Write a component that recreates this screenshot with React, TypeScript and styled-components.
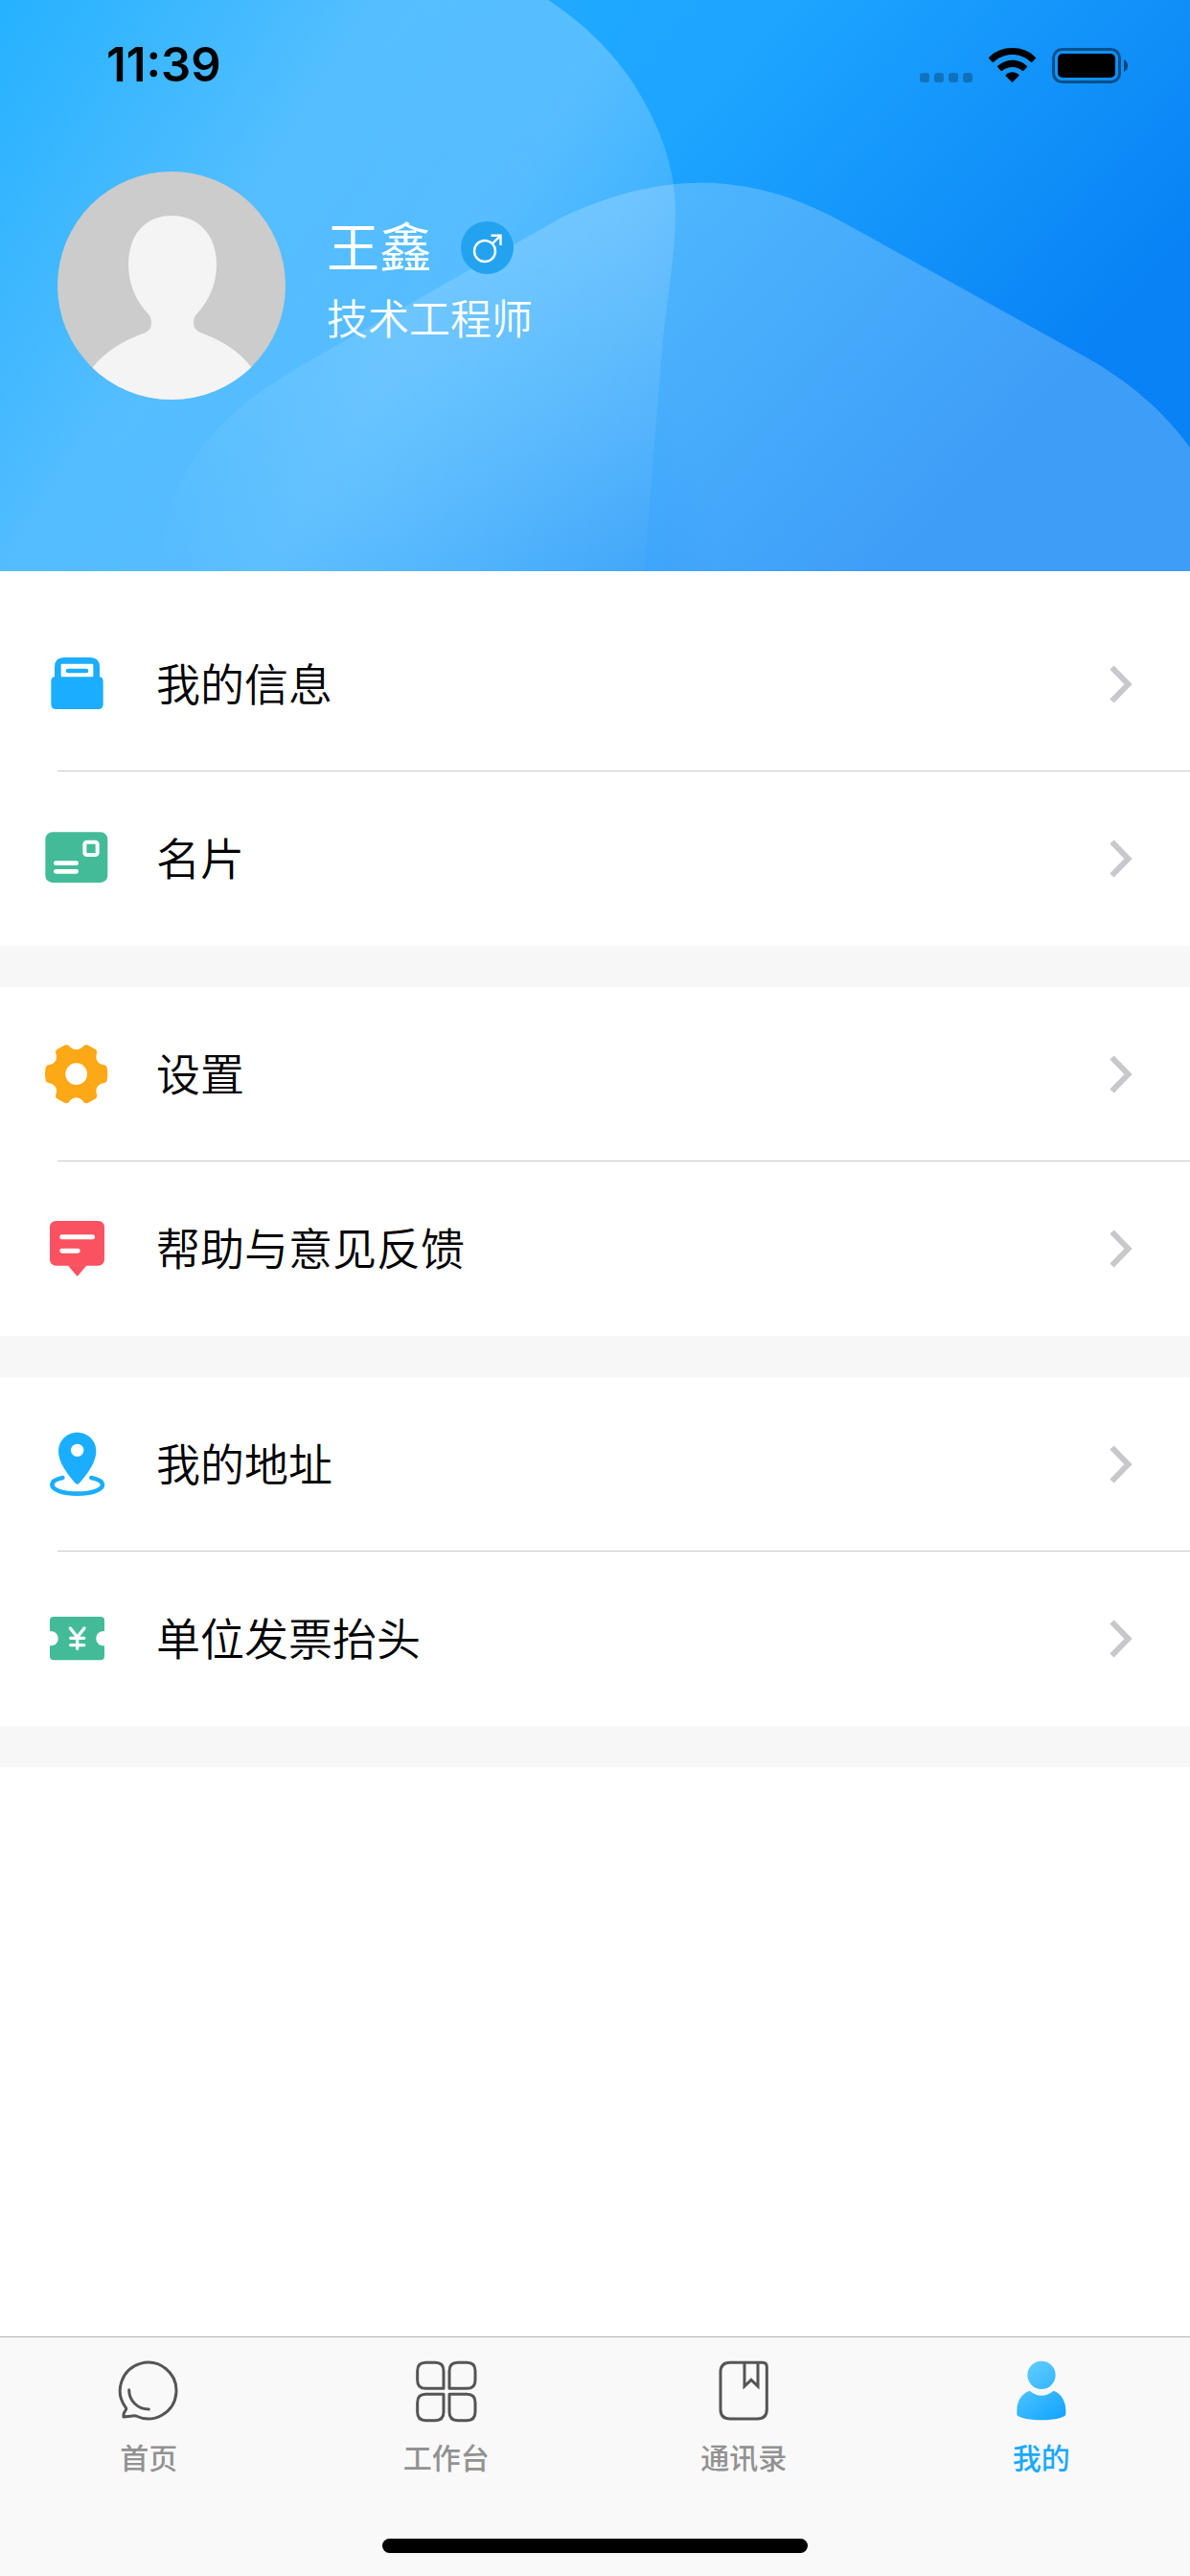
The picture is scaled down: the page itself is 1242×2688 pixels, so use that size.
import React from "react";
import styled, { createGlobalStyle } from "styled-components";

const GlobalStyle = createGlobalStyle`
  *, *::before, *::after { box-sizing: border-box; }
  body {
    margin: 0;
    background: #ffffff;
    font-family: "Noto Sans CJK SC", sans-serif;
    font-weight: 350;
  }
  ul { margin: 0; padding: 0; list-style: none; }
  a { color: inherit; text-decoration: none; }
  svg { display: block; }
`;

const Page = styled.div`
  min-height: 100vh;
  display: flex;
  flex-direction: column;
`;

const Hero = styled.header`
  position: relative;
  height: 596px;
  overflow: hidden;
  background: #1ca3ff;
`;

const HeroArt = styled.svg`
  position: absolute;
  inset: 0;
  width: 100%;
  height: 100%;
`;

const HeroContent = styled.div`
  position: relative;
`;

const StatusBar = styled.div`
  display: flex;
  align-items: center;
  justify-content: space-between;
  height: 135px;
  padding: 0 65px 0 111px;
`;

const Clock = styled.time`
  color: #000000;
  font-family: Inter, sans-serif;
  font-size: 49px;
  font-weight: 600;
  line-height: 60px;
`;

const StatusIcons = styled.div`
  display: flex;
  align-items: center;
  gap: 17px;
`;

const Profile = styled.section`
  display: flex;
  align-items: flex-start;
  gap: 43px;
  padding: 44px 60px 0;
`;

const Avatar = styled.div`
  flex: none;
  width: 238px;
  height: 238px;
  border-radius: 50%;
  overflow: hidden;
  background: #cccccc;
`;

const Identity = styled.div`
  padding-top: 41px;
  color: #ffffff;
`;

const NameRow = styled.div`
  display: flex;
  align-items: center;
  gap: 30px;
`;

const Name = styled.h1`
  margin: 0;
  padding-bottom: 8px;
  font-size: 55px;
  font-weight: 400;
  line-height: 68px;
`;

const JobTitle = styled.p`
  margin: 0;
  font-size: 43px;
  line-height: 68px;
`;

const Menu = styled.main`
  flex: 1;
  padding-top: 27px;
`;

const MenuGroup = styled.ul`
  border-bottom: 43px solid #f7f7f7;
`;

const MenuItem = styled.li`
  &:not(:last-child)::after {
    content: "";
    display: block;
    height: 1px;
    margin-left: 60px;
    background: #c8c7cc;
  }

  &:last-child {
    padding-bottom: 1px;
  }
`;

const MenuLink = styled.a`
  display: flex;
  align-items: center;
  height: 181px;
  padding: 0 60px 0 45px;
`;

const MenuLabel = styled.span`
  flex: 1;
  margin-left: 47px;
  padding-bottom: 6px;
  color: #000000;
  font-size: 46px;
  line-height: 68px;
`;

const TabBar = styled.nav`
  display: flex;
  flex-direction: column;
  align-items: center;
  justify-content: space-between;
  height: 250px;
  padding: 23px 0 24px;
  border-top: 1px solid #b2b2b2;
  background: #f9f9f9;
`;

const Tabs = styled.ul`
  display: grid;
  grid-template-columns: repeat(4, 1fr);
  width: 100%;
`;

const Tab = styled.a<{ $active?: boolean }>`
  display: flex;
  flex-direction: column;
  align-items: center;
  gap: 14px;
  color: ${({ $active }) => ($active ? "#1ba9ff" : "#929292")};
  font-size: 30px;
  font-weight: 500;
  line-height: 42px;
`;

const HomeIndicator = styled.div`
  width: 444px;
  height: 15px;
  border-radius: 8px;
  background: #000000;
`;

const HeroBackground = () => (
  <HeroArt viewBox="0 0 1242 596" preserveAspectRatio="none" aria-hidden="true">
    <defs>
      <linearGradient id="base" gradientUnits="userSpaceOnUse" x1="0" y1="0" x2="830" y2="747">
        <stop offset="0" stopColor="#25b2ff" />
        <stop offset="0.55" stopColor="#1da5ff" />
        <stop offset="0.98" stopColor="#0882f5" />
      </linearGradient>
      <linearGradient id="sheen" gradientUnits="userSpaceOnUse" x1="0" y1="0" x2="773" y2="503">
        <stop offset="0" stopColor="#fff" stopOpacity="0" />
        <stop offset="0.36" stopColor="#fff" stopOpacity="0.23" />
        <stop offset="0.6" stopColor="#fff" stopOpacity="0.25" />
        <stop offset="0.78" stopColor="#fff" stopOpacity="0.15" />
        <stop offset="0.97" stopColor="#fff" stopOpacity="0.02" />
      </linearGradient>
      <linearGradient id="hill" gradientUnits="userSpaceOnUse" x1="180" y1="520" x2="700" y2="380">
        <stop offset="0" stopColor="#fff" stopOpacity="0.02" />
        <stop offset="0.4" stopColor="#fff" stopOpacity="0.11" />
        <stop offset="1" stopColor="#fff" stopOpacity="0.22" />
      </linearGradient>
    </defs>
    <rect width="1242" height="596" fill="url(#base)" />
    <path
      d="M0 0H572C604 20 640 54 661 87C692 136 705 180 705 221C705 260 697 310 693 344C686 420 680 510 672 596H0Z"
      fill="url(#sheen)"
    />
    <path
      d="M168 596C172 480 240 425 317 380L586 227C690 178 783 178 880 232L1125 368C1180 398 1215 430 1242 467V596Z"
      fill="url(#hill)"
    />
  </HeroArt>
);

const SignalDots = () => (
  <svg width="55" height="38" viewBox="0 0 55 38" fill="#000" fillOpacity="0.25" aria-hidden="true">
    {[0, 15, 30, 45].map((x) => (
      <rect key={x} x={x} y="27" width="10" height="10" rx="3" />
    ))}
  </svg>
);

const WifiIcon = () => (
  <svg width="49" height="38" viewBox="0 0 147 114" aria-hidden="true">
    <path d="M74 3C103 3 128 13 147 33Q148 35 146 37L136 47Q134 49 132 47C115 32 95 24 74 24S32 32 15 47Q13 49 11 47L1 37Q-1 35 0 33C19 13 45 3 74 3Z" />
    <path d="M74 41C92 41 108 48 120 60Q121 62 119 64L109 74Q107 76 104 74C96 67 86 63 74 63S52 67 43 74Q40 76 38 74L28 64Q26 62 27 60C40 48 56 41 74 41Z" />
    <path d="M74 79C82 79 88 82 94 87Q96 89 94 91L76 109Q74 112 71 109L53 91Q52 89 54 87C59 82 66 79 74 79Z" />
  </svg>
);

const BatteryIcon = () => (
  <svg width="79" height="38" viewBox="0 0 79 38" aria-hidden="true">
    <rect x="1.5" y="2.5" width="69" height="34" rx="9" fill="none" stroke="#000" strokeOpacity="0.45" strokeWidth="3" />
    <rect x="6" y="7" width="60" height="25" rx="5" />
    <path d="M75 13Q79 15 79 19.500T75 26Z" fillOpacity="0.5" />
  </svg>
);

const Silhouette = () => (
  <svg width="238" height="238" viewBox="0 0 238 238" role="img" aria-label="头像">
    <path
      fill="#f4f4f4"
      d="M119 46C147 46 166 66 166 97C166 119 157 136 145 149Q142 152 142 158Q142 165 149 168Q185 181 202 204V238H37V204Q55 181 92 168Q98 165 98 158Q98 152 95 149C83 136 74 119 74 97C74 66 92 46 119 46Z"
    />
  </svg>
);

const MaleBadge = () => (
  <svg width="55" height="55" viewBox="0 0 55 55" role="img" aria-label="男">
    <circle cx="27.500" cy="27.500" r="27.500" fill="#23a3ef" />
    <g fill="none" stroke="#fff" strokeWidth="2.400">
      <circle cx="25" cy="31" r="11" />
      <path d="M33 23L41.500 14.800M31.500 14.800H41.500V25" />
    </g>
  </svg>
);

const MenuIcon = ({ children }: { children: React.ReactNode }) => (
  <svg width="71" height="71" viewBox="0 0 213 213" aria-hidden="true">
    {children}
  </svg>
);

const Chevron = () => (
  <svg width="24" height="41" viewBox="0 0 24 41" fill="none" stroke="#c7c7cc" strokeWidth="6" aria-hidden="true">
    <path d="M2.500 3.500L19.500 21L2.500 38.500" />
  </svg>
);

const InfoIcon = () => (
  <MenuIcon>
    <path fill="#1badff" d="M36 92V54Q36 24 66 24H147Q177 24 177 54V92Z" />
    <rect x="25" y="84" width="163" height="102" rx="14" fill="#1badff" />
    <rect x="56" y="44" width="101" height="41" rx="3" fill="#fff" />
    <rect x="71" y="59" width="71" height="14" rx="7" fill="#1badff" />
  </MenuIcon>
);

const CardIcon = () => (
  <MenuIcon>
    <rect x="7" y="25" width="195" height="158" rx="22" fill="#43bb99" />
    <rect x="130" y="56" width="40" height="40" rx="7" fill="none" stroke="#fff" strokeWidth="12" />
    <rect x="33" y="115" width="78" height="14" rx="7" fill="#fff" />
    <rect x="33" y="141" width="78" height="14" rx="7" fill="#fff" />
  </MenuIcon>
);

const GearIcon = () => (
  <MenuIcon>
    <path
      fill="#fda816"
      d="M104 31Q118 30 127 19Q133 13 141 17L163 29Q171 34 168 43Q164 52 167 62Q174 76 189 78Q197 79 200 86Q204 107 200 128Q197 135 189 136Q174 138 167 152Q164 162 168 171Q171 180 163 185L141 197Q133 201 127 195Q118 182 104 181Q90 182 81 195Q75 201 67 197L45 185Q37 180 40 171Q44 162 41 152Q34 138 19 136Q11 135 8 128Q4 107 8 86Q11 79 19 78Q34 76 41 62Q44 52 40 43Q37 34 45 29L67 17Q75 13 81 19Q90 30 104 31Z"
    />
    <circle cx="104" cy="107" r="34" fill="#fff" />
  </MenuIcon>
);

const FeedbackIcon = () => (
  <MenuIcon>
    <rect x="21" y="21" width="171" height="140" rx="19" fill="#fa5260" />
    <path fill="#fa5260" d="M77 160H137L110 191Q107 196 104 191Z" />
    <rect x="52" y="64" width="110" height="15" rx="7" fill="#fff" />
    <rect x="52" y="107" width="64" height="15" rx="7" fill="#fff" />
  </MenuIcon>
);

const AddressIcon = () => (
  <MenuIcon>
    <path fill="#1badff" d="M107 8C139 8 166 33 166 67C166 104 134 144 112 168Q107 173 102 168C80 144 48 104 48 67C48 33 75 8 107 8Z" />
    <circle cx="107" cy="64" r="20" fill="#fff" />
    <path
      fill="none"
      stroke="#1badff"
      strokeWidth="14"
      strokeLinecap="round"
      d="M61 150C38 155 28 163 28 172C28 189 64 200 107 200S186 189 186 172C186 163 174 155 151 150"
    />
  </MenuIcon>
);

const InvoiceIcon = () => (
  <MenuIcon>
    <path
      fill="#43bb99"
      d="M33 39H180Q192 39 192 51V84C175 84 166 94 166 107S175 130 192 130V163Q192 175 180 175H33Q21 175 21 163V130C38 130 47 120 47 107S38 84 21 84V51Q21 39 33 39Z"
    />
    <g fill="none" stroke="#fff" strokeWidth="10" strokeLinecap="round">
      <path d="M85 75L107 103L129 75M107 103V139M86 106H128M86 128H128" />
    </g>
  </MenuIcon>
);

const TabIcon = ({ children }: { children: React.ReactNode }) => (
  <svg
    width="66"
    height="66"
    viewBox="0 0 198 198"
    fill="none"
    stroke="#555555"
    strokeWidth="9"
    strokeLinecap="round"
    strokeLinejoin="round"
    aria-hidden="true"
  >
    {children}
  </svg>
);

const HomeIcon = () => (
  <TabIcon>
    <path d="M28 151A88 88 0 1 1 60 177Q52 175 42 178L21 180Q20 168 26 161Q31 155 28 151Z" />
    <path d="M38 95C38 130 66 156 100 156" />
  </TabIcon>
);

const WorkbenchIcon = () => (
  <TabIcon>
    <path d="M90 91H34Q8 91 8 65V36Q8 10 34 10H64Q90 10 90 36Z" />
    <path d="M108 91H163Q189 91 189 65V36Q189 10 163 10H134Q108 10 108 36Z" />
    <path d="M90 109H34Q8 109 8 135V165Q8 191 34 191H64Q90 191 90 165Z" />
    <path d="M108 109H163Q189 109 189 135V165Q189 191 163 191H134Q108 191 108 165Z" />
  </TabIcon>
);

const ContactsIcon = () => (
  <TabIcon>
    <path d="M57 10H158Q172 10 172 24V156Q172 186 142 186H57Q27 186 27 156V40Q27 10 57 10Z" />
    <path strokeLinejoin="miter" d="M102 10V84L123 64L144 84V10" />
  </TabIcon>
);

const MeIcon = () => (
  <TabIcon>
    <defs>
      <linearGradient id="me" gradientUnits="userSpaceOnUse" x1="50" y1="20" x2="165" y2="170">
        <stop offset="0" stopColor="#5fccff" />
        <stop offset="1" stopColor="#17a6ff" />
      </linearGradient>
    </defs>
    <g fill="url(#me)" stroke="none">
      <circle cx="99" cy="49" r="44" />
      <path d="M62 98Q99 128 137 98C160 106 175 130 175 160V172C175 182 140 190 99 190S22 182 22 172V160C22 130 37 106 62 98Z" />
    </g>
  </TabIcon>
);

const menuGroups = [
  [
    { label: "我的信息", Icon: InfoIcon },
    { label: "名片", Icon: CardIcon },
  ],
  [
    { label: "设置", Icon: GearIcon },
    { label: "帮助与意见反馈", Icon: FeedbackIcon },
  ],
  [
    { label: "我的地址", Icon: AddressIcon },
    { label: "单位发票抬头", Icon: InvoiceIcon },
  ],
];

const tabs = [
  { label: "首页", Icon: HomeIcon, active: false },
  { label: "工作台", Icon: WorkbenchIcon, active: false },
  { label: "通讯录", Icon: ContactsIcon, active: false },
  { label: "我的", Icon: MeIcon, active: true },
];

export default function App() {
  return (
    <Page>
      <GlobalStyle />
      <Hero>
        <HeroBackground />
        <HeroContent>
          <StatusBar>
            <Clock>11:39</Clock>
            <StatusIcons>
              <SignalDots />
              <WifiIcon />
              <BatteryIcon />
            </StatusIcons>
          </StatusBar>
          <Profile>
            <Avatar>
              <Silhouette />
            </Avatar>
            <Identity>
              <NameRow>
                <Name>王鑫</Name>
                <MaleBadge />
              </NameRow>
              <JobTitle>技术工程师</JobTitle>
            </Identity>
          </Profile>
        </HeroContent>
      </Hero>
      <Menu>
        {menuGroups.map((items) => (
          <MenuGroup key={items[0].label}>
            {items.map(({ label, Icon }) => (
              <MenuItem key={label}>
                <MenuLink href="#">
                  <Icon />
                  <MenuLabel>{label}</MenuLabel>
                  <Chevron />
                </MenuLink>
              </MenuItem>
            ))}
          </MenuGroup>
        ))}
      </Menu>
      <TabBar>
        <Tabs>
          {tabs.map(({ label, Icon, active }) => (
            <li key={label}>
              <Tab href="#" $active={active} aria-current={active ? "page" : undefined}>
                <Icon />
                {label}
              </Tab>
            </li>
          ))}
        </Tabs>
        <HomeIndicator />
      </TabBar>
    </Page>
  );
}
